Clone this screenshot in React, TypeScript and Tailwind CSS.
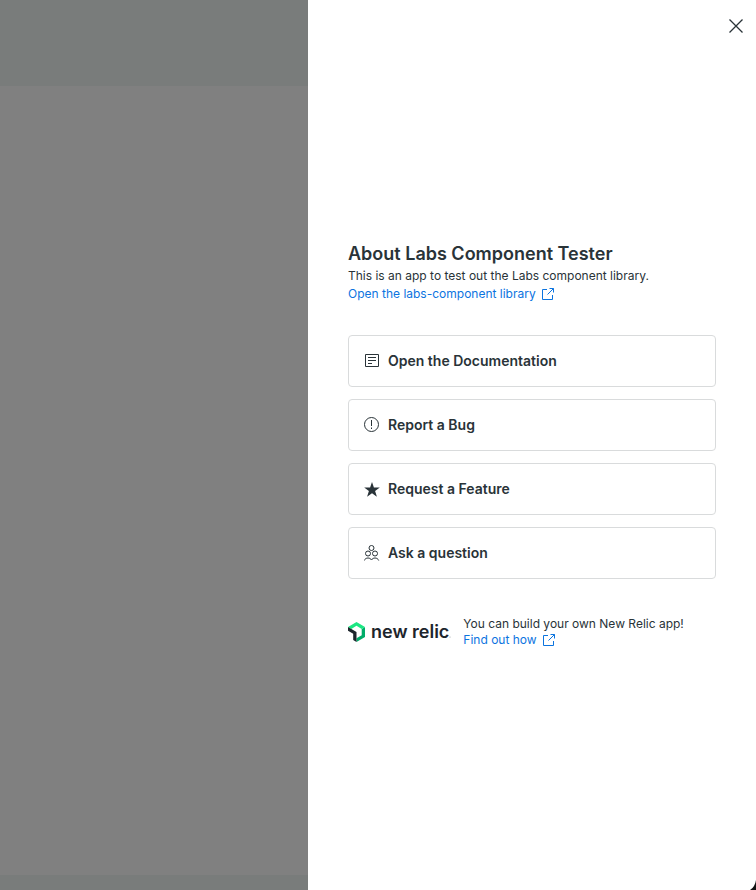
import type { ReactNode } from "react";

function ExternalLinkIcon() {
  return (
    <svg className="size-3 shrink-0" viewBox="0 0 12 12" fill="none" stroke="currentColor" overflow="visible" aria-hidden="true">
      <path d="M5 1.5H.5v10h10V7M7.500 .5h4v4M11.500 .5L5.500 6.500" />
    </svg>
  );
}

function DocumentIcon() {
  return (
    <svg className="size-4 shrink-0" viewBox="0 0 16 16" fill="none" stroke="currentColor" aria-hidden="true">
      <path d="M1.5 1.5h13v12h-13zM4 4.5h8M4 7.5h8M4 10.5h4" />
    </svg>
  );
}

function AlertIcon() {
  return (
    <svg className="size-4 shrink-0" viewBox="0 0 16 16" fill="none" stroke="currentColor" aria-hidden="true">
      <circle cx="7.5" cy="7.5" r="7" />
      <path d="M7.5 3v6M7.5 10.5v1.5" />
    </svg>
  );
}

function StarIcon() {
  return (
    <svg className="size-4 shrink-0" viewBox="0 0 16 16" fill="currentColor" aria-hidden="true">
      <path d="M8 1l1.900 5.400h5.900l-4.700 3.500 1.800 5.900L8 12.300l-4.900 3.500 1.800-5.900L.2 6.400h5.900z" />
    </svg>
  );
}

function PeopleIcon() {
  return (
    <svg className="size-4 shrink-0" viewBox="0 0 16 16" fill="none" stroke="currentColor" aria-hidden="true">
      <circle cx="7.5" cy="3" r="2.500" />
      <circle cx="4" cy="8.5" r="2.500" />
      <circle cx="11" cy="8.5" r="2.500" />
      <path d="M.3 15.500c.6-1.700 2-2.500 3.700-2.500s2.800.8 3.500 2c.7-1.200 1.800-2 3.500-2s3.100.8 3.700 2.500" />
    </svg>
  );
}

function NewRelicLogo() {
  return (
    <div className="flex items-center gap-1.5 text-[#1d252c]">
      <svg className="h-5 w-[17px] shrink-0" viewBox="0 0 17 20" aria-hidden="true">
        <path fill="#00ac69" d="M13.7 6.9v6.3L8.5 16.2V20L17 15.1V5z" />
        <path fill="#1ce783" d="M8.5 3.8l5.2 3.1L17 5 8.5 0 0 5l3.300 1.900z" />
        <path fill="#1d252c" d="M5.200 11.800V18.100L8.500 20V9.900L0 5v3.800z" />
      </svg>
      <span className="flex items-end text-lg leading-5 font-semibold">
        new relic
        <svg className="mb-1 size-0.5" viewBox="0 0 2 2" fill="#9a9fa2" aria-hidden="true">
          <circle cx="1" cy="1" r=".6" />
        </svg>
      </span>
    </div>
  );
}

function TextLink({ children }: { children: ReactNode }) {
  return (
    <a href="#" className="inline-flex items-center gap-1.5 text-[#0c74df]">
      {children}
      <ExternalLinkIcon />
    </a>
  );
}

const actions = [
  { label: "Open the Documentation", icon: <DocumentIcon /> },
  { label: "Report a Bug", icon: <AlertIcon /> },
  { label: "Request a Feature", icon: <StarIcon /> },
  { label: "Ask a question", icon: <PeopleIcon /> },
];

export default function App() {
  return (
    <div className="relative flex min-h-screen bg-[#808080] font-['Inter',sans-serif] text-xs text-[#293338]">
      <div className="flex flex-1 flex-col justify-between">
        <div className="h-[86px] bg-[#797c7b]" />
        <div className="h-[15px] bg-[#797c7b]" />
      </div>
      <aside className="relative flex w-full max-w-md flex-col justify-center overflow-hidden bg-white px-10">
        <button type="button" aria-label="Close" className="absolute top-3 right-1.5 flex size-7 items-center justify-center">
          <svg className="size-4" viewBox="0 0 16 16" fill="none" stroke="currentColor" strokeWidth="1.3" aria-hidden="true">
            <path d="M1.5 1.5l13 13M14.5 1.5l-13 13" />
          </svg>
        </button>
        <h1 className="text-lg leading-6 font-semibold">About Labs Component Tester</h1>
        <p className="leading-5">This is an app to test out the Labs component library.</p>
        <p className="flex leading-4">
          <TextLink>Open the labs-component library</TextLink>
        </p>
        <nav className="mt-[33px] flex flex-col gap-3">
          {actions.map(({ label, icon }) => (
            <a
              key={label}
              href="#"
              className="flex h-[52px] items-center gap-2 rounded border border-[#d9dbdc] px-[15px] text-sm font-semibold"
            >
              {icon}
              {label}
            </a>
          ))}
        </nav>
        <div className="mt-[37px] flex items-center gap-3">
          <NewRelicLogo />
          <div className="leading-4">
            <p>You can build your own New Relic app!</p>
            <p className="flex">
              <TextLink>Find out how</TextLink>
            </p>
          </div>
        </div>
        <svg className="absolute right-0 bottom-0 h-2.5 w-1.5" viewBox="0 0 6 10" fill="#111" aria-hidden="true">
          <path d="M6 0v10H0Q5 7 6 0z" />
        </svg>
      </aside>
    </div>
  );
}
